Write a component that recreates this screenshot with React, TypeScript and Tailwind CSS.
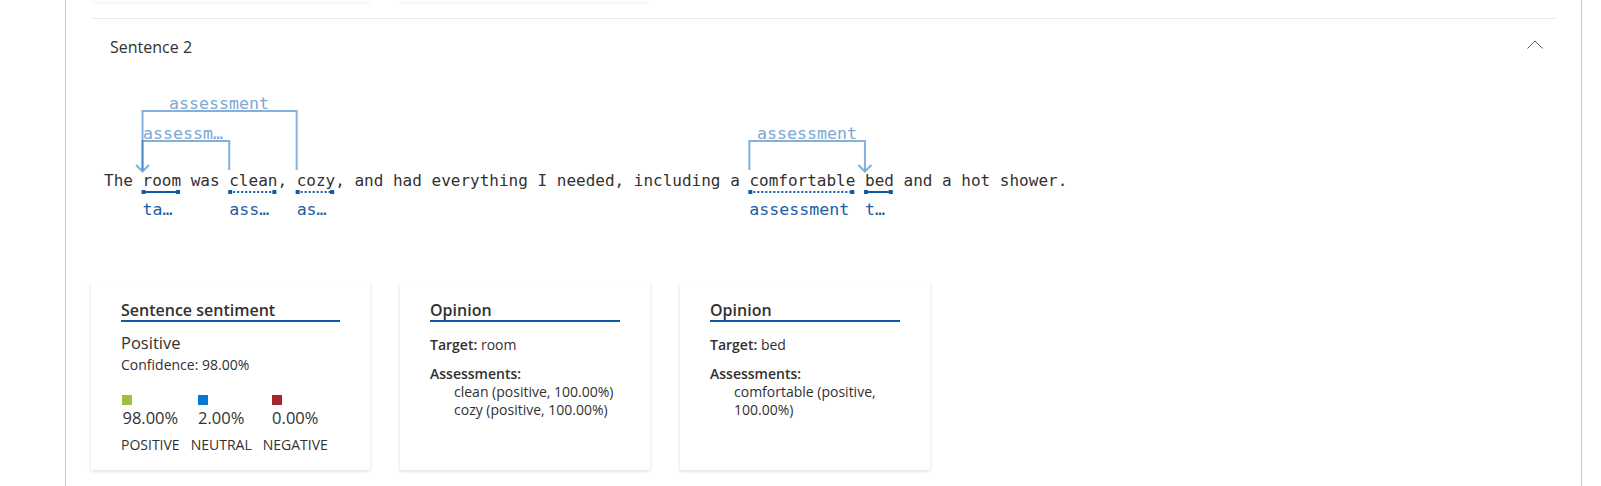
import React from "react";

const CW = 9.632; // DejaVu Sans Mono advance at 16px
const X = (col: number) => col * CW;

const SENTENCE =
    "The room was clean, cozy, and had everything I needed, including a comfortable bed and a hot shower.";

type Span = { start: number; len: number; dotted: boolean; label: string };

// tokens under the sentence
const spans: Span[] = [
    { start: 4, len: 4, dotted: false, label: "ta…" },
    { start: 13, len: 5, dotted: true, label: "ass…" },
    { start: 20, len: 4, dotted: true, label: "as…" },
    { start: 67, len: 11, dotted: true, label: "assessment" },
    { start: 79, len: 3, dotted: false, label: "t…" },
];

const LINE = "#1f6fbf";

function Diagram() {
    const uy = 102;
    return (
        <div className="relative ml-[13px] h-[132px] w-[1000px] font-['DejaVu_Sans_Mono',monospace]">
            <div className="pt-[81px] text-[16px] leading-[20px] whitespace-pre text-[#323130]">{SENTENCE}</div>

            <svg className="absolute left-0 top-0" width="1000" height="132" viewBox="0 0 1000 132">
                <g stroke={LINE} strokeOpacity="0.55" strokeWidth="2" fill="none">
                    {/* room <- cozy */}
                    <polyline points={`${X(4)},80 ${X(4)},21 ${X(20)},21 ${X(20)},80`} />
                    {/* room <- clean */}
                    <polyline points={`${X(4)},80 ${X(4)},51 ${X(13)},51 ${X(13)},80`} />
                    {/* comfortable -> bed */}
                    <polyline points={`${X(67)},80 ${X(67)},51 ${X(79)},51 ${X(79)},80`} />
                    <polyline points={`${X(4) - 6.5},75 ${X(4)},81.5 ${X(4) + 6.5},75`} />
                    <polyline points={`${X(79) - 6.5},75 ${X(79)},81.5 ${X(79) + 6.5},75`} />
                </g>
                {spans.map((s, i) => {
                    const x1 = X(s.start);
                    const x2 = X(s.start + s.len) - 2;
                    return (
                        <g key={i} fill="#0f5ba7">
                            <line
                                x1={x1}
                                y1={uy}
                                x2={x2}
                                y2={uy}
                                stroke="#0f5ba7"
                                strokeWidth="2"
                                strokeDasharray={s.dotted ? "2 2" : undefined}
                            />
                            <rect x={x1 - 1} y={uy - 2} width="4" height="4" />
                            <rect x={x2 - 3} y={uy - 2} width="4" height="4" />
                        </g>
                    );
                })}
            </svg>

            {/* relation labels */}
            <span className="absolute left-[65px] top-[4px] text-[16.6px] leading-[20px] text-[#7ea8d4]">assessment</span>
            <span className="absolute left-[39px] top-[34px] text-[16.6px] leading-[20px] text-[#7ea8d4]">assessm…</span>
            <span className="absolute left-[653px] top-[34px] text-[16.6px] leading-[20px] text-[#7ea8d4]">assessment</span>

            {spans.map((s, i) => (
                <span
                    key={i}
                    className="absolute top-[110px] text-[16.6px] leading-[20px] text-[#1b5ea8] whitespace-pre"
                    style={{ left: X(s.start) }}
                >
                    {s.label}
                </span>
            ))}
        </div>
    );
}

const card =
    "bg-white shadow-[0_1.6px_3.6px_rgba(0,0,0,0.13),0_0.3px_0.9px_rgba(0,0,0,0.11)] px-[30px] pt-[18px] h-[188px]";

function CardTitle({ children }: { children: React.ReactNode }) {
    return (
        <div className="text-[16px] leading-[20px] font-semibold text-[#323130] border-b-2 border-[#0f5aa5]">
            {children}
        </div>
    );
}

function Score({ color, value, label }: { color: string; value: string; label: string }) {
    return (
        <div className="flex flex-col items-center">
            <div className="flex flex-col items-start">
                <div className={`w-[10px] h-[10px] ${color}`} />
                <div className="mt-[2px] text-[16.5px] leading-[22px]">{value}</div>
            </div>
            <div className="mt-[6px] text-[14px] leading-[19px]">{label}</div>
        </div>
    );
}

function Opinion({ target, lines }: { target: string; lines: string[] }) {
    return (
        <div className={`${card} w-[250px]`}>
            <CardTitle>Opinion</CardTitle>
            <div className="mt-[13px] text-[14px] leading-[19px]">
                <span className="font-semibold">Target:</span> {target}
            </div>
            <div className="mt-[10px] text-[14px] leading-[19px] font-semibold">Assessments:</div>
            <div className="pl-[24px] text-[14px] leading-[18px]">
                {lines.map((l) => (
                    <div key={l} className="whitespace-nowrap">
                        {l}
                    </div>
                ))}
            </div>
        </div>
    );
}

export default function App() {
    return (
        <div className="w-[1601px] h-[486px] bg-white overflow-hidden font-['Open_Sans',sans-serif] text-[#323130]">
            <div className="ml-[65px] w-[1517px] h-full border-x border-[#c8c6c4] pl-[25px] pr-[25px]">
                {/* bottoms of the previous sentence's cards */}
                <div className="flex gap-[30px] h-px">
                    <div className="w-[279px] h-px bg-white shadow-[0_1.6px_3.6px_rgba(0,0,0,0.13)]" />
                    <div className="w-[249px] h-px bg-white shadow-[0_1.6px_3.6px_rgba(0,0,0,0.13)]" />
                </div>

                <div className="mt-[17px] border-t border-[#edebe9]">
                    <div className="flex items-start justify-between pl-[19px] pr-[13px] pt-[17px]">
                        <div className="text-[16px] leading-[22px]">Sentence 2</div>
                        <svg className="mt-[4px]" width="16" height="9" viewBox="0 0 16 9">
                            <polyline points="0.5,8.5 8,1 15.5,8.5" fill="none" stroke="#605e5c" strokeWidth="1" />
                        </svg>
                    </div>

                    <div className="mt-[32px]">
                        <Diagram />
                    </div>

                    <div className="mt-[60px] flex gap-[30px]">
                        <div className={`${card} w-[279px]`}>
                            <CardTitle>Sentence sentiment</CardTitle>
                            <div className="mt-[10px] text-[16.5px] leading-[22px]">Positive</div>
                            <div className="mt-px text-[14px] leading-[19px]">Confidence: 98.00%</div>
                            <div className="mt-[21px] flex gap-[11px]">
                                <Score color="bg-[#9bc13c]" value="98.00%" label="POSITIVE" />
                                <Score color="bg-[#0078d4]" value="2.00%" label="NEUTRAL" />
                                <Score color="bg-[#a4262c]" value="0.00%" label="NEGATIVE" />
                            </div>
                        </div>
                        <Opinion target="room" lines={["clean (positive, 100.00%)", "cozy (positive, 100.00%)"]} />
                        <Opinion target="bed" lines={["comfortable (positive,", "100.00%)"]} />
                    </div>
                </div>
            </div>
        </div>
    );
}
